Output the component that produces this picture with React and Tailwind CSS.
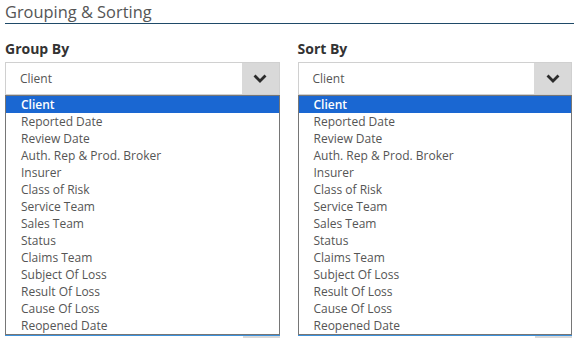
import React from "react";

const options = [
  "Client",
  "Reported Date",
  "Review Date",
  "Auth. Rep & Prod. Broker",
  "Insurer",
  "Class of Risk",
  "Service Team",
  "Sales Team",
  "Status",
  "Claims Team",
  "Subject Of Loss",
  "Result Of Loss",
  "Cause Of Loss",
  "Reopened Date",
];

function Chevron() {
  return (
    <svg width="14" height="10" viewBox="0 0 14 10" fill="none">
      <path d="M2.5 2.5L7 7L11.5 2.5" stroke="#2b2b2b" strokeWidth="2.8" strokeLinecap="square" />
    </svg>
  );
}

function SelectColumn({ label }) {
  return (
    <div className="flex flex-col">
      <div className="mt-[16px] h-[18px] text-[14px] leading-[18px] font-bold text-[#333]">{label}</div>
      <div className="mt-[4px] flex h-[33px] border border-[#d0d0d0] bg-white">
        <div className="flex flex-1 items-center pl-[14px] text-[12px] text-[#555]">Client</div>
        <div className="flex w-[37px] items-center justify-center bg-[#d9d9d9]">
          <Chevron />
        </div>
      </div>
      <ul className="border border-[#767676] bg-white">
        {options.map((opt, i) => (
          <li
            key={opt}
            className={
              i === 0
                ? "h-[17px] bg-[#1a67d2] pl-[15px] text-[12px] leading-[17px] font-semibold text-white"
                : "h-[17px] pl-[15px] text-[12px] leading-[17px] text-[#555]"
            }
          >
            {opt}
          </li>
        ))}
      </ul>
      <div className="flex h-[3px] flex-col">
        <div className="h-px bg-[#3d92dc]" />
        <div className="flex h-[2px] justify-end">
          <div className="w-[37px] bg-[#d9d9d9]" />
        </div>
      </div>
    </div>
  );
}

export default function App() {
  return (
    <div
      className="h-[338px] w-[574px] overflow-hidden bg-white pl-[5px]"
      style={{ fontFamily: '"Open Sans", "Liberation Sans", sans-serif' }}
    >
      <div className="h-6 border-b border-[#1f4a68] text-[16.4px] leading-[24px] text-[#555]">
        Grouping &amp; Sorting
      </div>
      <div className="grid grid-cols-2 gap-[18px] pr-[2px]">
        <SelectColumn label="Group By" />
        <SelectColumn label="Sort By" />
      </div>
    </div>
  );
}
